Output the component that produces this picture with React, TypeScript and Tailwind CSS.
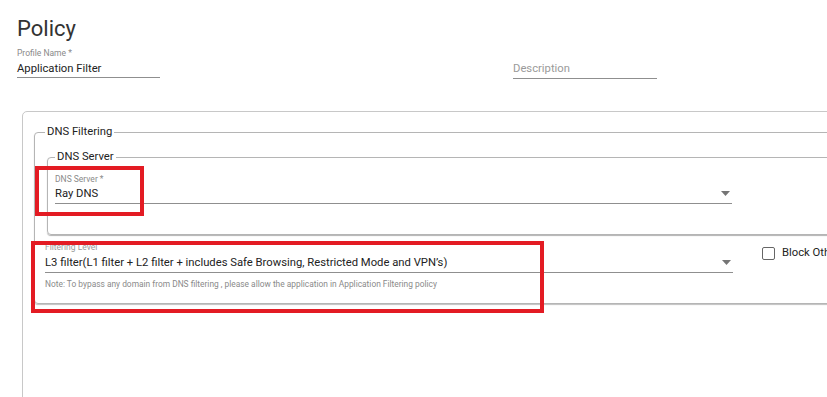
import React from 'react';

function Caret() {
  return (
    <svg width="9" height="5" viewBox="0 0 9 5" className="shrink-0">
      <path d="M0 0 L9 0 L4.5 5 Z" fill="#757575" />
    </svg>
  );
}

export default function App() {
  return (
    <div className="relative w-[827px] h-[397px] overflow-hidden bg-white font-['Roboto',sans-serif] text-[#222]">
      <div className="pl-[17px] pt-[15px]">
        <h1 className="text-[22px] leading-[28px] text-[#333]">Policy</h1>

        <div className="flex mt-[5px]">
          <div className="w-[143px]">
            <div className="text-[8.5px] leading-[10px] text-[#8a8a8a]">Profile Name *</div>
            <div className="mt-[4px] text-[11.25px] leading-[14px] pb-[1px] border-b border-[#8f8f8f]">
              Application Filter
            </div>
          </div>
          <div className="w-[144px] ml-[353px]">
            <div className="h-[10px]" />
            <div className="mt-[4px] text-[11.25px] leading-[14px] pb-[2px] border-b border-[#8f8f8f] text-[#9a9a9a]">
              Description
            </div>
          </div>
        </div>
      </div>

      <div className="ml-[22px] mt-[32px] w-[900px] h-[400px] border border-[#c8c8c8] rounded-tl-[5px] pl-[11px] pt-[13px]">
        <fieldset className="w-[880px] border border-[#b5b5b5] rounded-[4px] px-[10px] pb-[14px] shadow-[0_1px_1px_rgba(0,0,0,0.25)]">
          <legend className="px-[2px] text-[11.25px] leading-[14px] text-[#222]">DNS Filtering</legend>

          <fieldset className="ml-[2px] mt-[11px] border border-[#b5b5b5] rounded-[4px] px-[7px] pt-[10px] pb-[30px] shadow-[0_1px_1px_rgba(0,0,0,0.3)]">
            <legend className="px-[2px] text-[11.25px] leading-[14px] text-[#222]">DNS Server</legend>
            <div className="w-[677px]">
              <div className="text-[8.5px] leading-[10px] text-[#8a8a8a]">DNS Server *</div>
              <div className="mt-[3px] flex items-center justify-between pb-[2px] border-b border-[#8f8f8f]">
                <span className="text-[11.25px] leading-[14px]">Ray DNS</span>
                <span className="mr-[2px] mb-[1px]"><Caret /></span>
              </div>
            </div>
          </fieldset>

          <div className="flex mt-[7px]">
            <div className="w-[688px]">
              <div className="text-[8.5px] leading-[10px] text-[#9a9a9a]">Filtering Level</div>
              <div className="mt-[4px] flex items-center justify-between pb-[2px] border-b border-[#8f8f8f]">
                <span className="text-[11.25px] leading-[14px]">
                  L3 filter(L1 filter + L2 filter + includes Safe Browsing, Restricted Mode and VPN’s)
                </span>
                <span className="mr-[2px] mb-[1px]"><Caret /></span>
              </div>
              <div className="mt-[6px] text-[8.4px] leading-[10px] text-[#8a8a8a] whitespace-nowrap">
                Note: To bypass any domain from DNS filtering , please allow the application in Application Filtering policy
              </div>
            </div>
            <div className="ml-[29px] mt-[4px] self-start flex items-center gap-[7px]">
              <span className="w-[13px] h-[13px] border border-[#666] rounded-[2px]" />
              <span className="text-[11.25px] leading-[14px] whitespace-nowrap">Block Other DNS</span>
            </div>
          </div>
        </fieldset>
      </div>

      {/* annotation boxes */}
      <div className="absolute left-[35px] top-[166px] w-[109px] h-[50px] border-[4px] border-[#e31b23]" />
      <div className="absolute left-[31px] top-[241px] w-[513px] h-[72px] border-[4px] border-[#e31b23]" />
    </div>
  );
}
